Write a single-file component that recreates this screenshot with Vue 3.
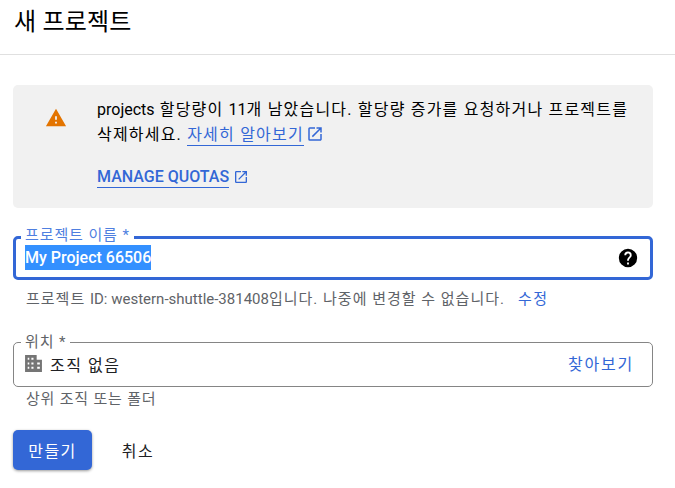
<script setup>
</script>

<template>
  <div class="page">
    <header class="head"><h1>새 프로젝트</h1></header>
    <main class="body">
      <section class="notice">
        <svg class="warn" viewBox="0 0 24 24" width="22" height="22"><path fill="#e37400" d="M1 21h22L12 2 1 21zm12-3h-2v-2h2v2zm0-4h-2v-4h2v4z"/></svg>
        <div class="notice-text">
          <p><span class="lat">projects</span> 할당량이 <span class="lat">11</span>개 남았습니다. 할당량 증가를 요청하거나 프로젝트를<br>삭제하세요. <a class="link">자세히 알아보기</a><svg class="ext ext-first" viewBox="0 0 24 24" width="18" height="18"><path fill="#3367d6" d="M19 19H5V5h7V3H5a2 2 0 0 0-2 2v14a2 2 0 0 0 2 2h14c1.100 0 2-.9 2-2v-7h-2v7zM14 3v2h3.590l-9.830 9.830 1.410 1.410L19 6.410V10h2V3h-7z"/></svg></p>
          <p class="manage"><a class="link strong lat">MANAGE QUOTAS</a><svg class="ext" viewBox="0 0 24 24" width="16" height="16"><path fill="#3367d6" d="M19 19H5V5h7V3H5a2 2 0 0 0-2 2v14a2 2 0 0 0 2 2h14c1.100 0 2-.9 2-2v-7h-2v7zM14 3v2h3.590l-9.830 9.830 1.410 1.410L19 6.410V10h2V3h-7z"/></svg></p>
        </div>
      </section>

      <div class="field focused">
        <span class="legend">프로젝트 이름 *</span>
        <div class="control">
          <span class="selected">My Project 66506</span>
          <svg class="help" viewBox="0 0 24 24" width="22" height="22"><path d="M12 2a10 10 0 1 0 0 20 10 10 0 0 0 0-20zm1 17h-2v-2h2v2zm2.070-7.750-.9.920C13.450 12.900 13 13.500 13 15h-2v-.5c0-1.100.450-2.100 1.170-2.830l1.240-1.260A2 2 0 1 0 10 9H8a4 4 0 1 1 8 0c0 .880-.360 1.680-.930 2.250z"/></svg>
        </div>
      </div>
      <p class="hint id-hint"><span>프로젝트 <span class="lat">ID: western-shuttle-381408</span>입니다. 나중에 변경할 수 없습니다.</span><a class="edit">수정</a></p>

      <div class="field location">
        <span class="legend grey">위치 *</span>
        <div class="control">
          <svg class="building" viewBox="0 0 18 18" width="19" height="19"><path fill="#757575" fill-rule="evenodd" d="M1 1h11v4.500h5V17H1V1zm2.500 2.500v2h1.500v-2H3.500zm3.500 0v2h2v-2H7zM3.500 8v2h1.500V8H3.500zM7 8v2h2V8H7zm5.500 0v2H15V8h-2.500zM3.500 12v2h1.500v-2H3.500zM7 12v2h2v-2H7zm5.500 0v2H15v-2h-2.500z"/></svg>
          <span class="value">조직 없음</span>
          <a class="browse">찾아보기</a>
        </div>
      </div>
      <p class="hint parent">상위 조직 또는 폴더</p>

      <div class="actions">
        <button class="create">만들기</button>
        <button class="cancel">취소</button>
      </div>
    </main>
  </div>
</template>

<style>
html, body { margin: 0; background: #fff; overflow: hidden; }
</style>

<style scoped>
.page { width: 675px; height: 488px; overflow: hidden; font-family: Roboto, "Noto Sans CJK KR", sans-serif; color: #202124; }
.head { height: 54px; border-bottom: 1px solid #e0e0e0; }
h1 { margin: 0; padding: 6px 0 0 14px; font-size: 24px; line-height: 32px; font-weight: 400; color: #000; letter-spacing: .2px; }
.body { padding: 30px 22px 0 13px; }
.notice { display: flex; height: 123px; background: #f1f1f1; border-radius: 5px; }
.warn { margin: 22px 0 0 32px; flex: none; }
.notice-text { margin-left: 30px; padding-top: 12px; width: 550px; font-size: 16px; line-height: 25px; color: #000; letter-spacing: 1.200px; }
.notice-text p { margin: 0; }
.lat { letter-spacing: 0; }
.link { color: #3367d6; border-bottom: 1px solid #3367d6; padding-bottom: 1px; }
.strong { font-weight: 500; }
.ext { vertical-align: -3px; margin-left: 2px; }
.manage { margin-top: 17px !important; }
.manage .ext { margin-left: 4px; }
.field { position: relative; box-sizing: border-box; border-radius: 5px; }
.focused { margin-top: 28px; border: 3px solid #3367d6; height: 44px; }
.location { margin-top: 33px; border: 1px solid #858585; height: 45px; }
.legend { position: absolute; top: -14px; left: 5px; background: #fff; padding: 0 4px; font-size: 15px; line-height: 20px; letter-spacing: .9px; color: #4f7fe0; }
.location .legend { left: 7px; top: -11px; }
.grey { color: #5f6368; }
.control { display: flex; align-items: center; height: 100%; }
.focused .control { padding: 0 11px 0 9px; }
.selected { background: #3390ff; color: #fff; font-size: 16px; line-height: 25px; font-weight: 500; margin-top: -1px; }
.help { margin-left: auto; }
.hint { margin: 0; font-size: 15px; line-height: 20px; color: #5f6368; letter-spacing: 1px; }
.id-hint { margin-top: 9px; padding-left: 13px; display: flex; gap: 13px; }
.edit { letter-spacing: 1.500px; }
.edit, .browse { color: #3367d6; }
.location .control { padding: 0 19px 0 10px; }
.building { margin-top: -3px; }
.value { margin-left: 7px; margin-top: -2px; font-size: 16px; color: #202124; letter-spacing: 1.500px; }
.browse { margin-left: auto; margin-top: -4px; font-size: 16px; letter-spacing: 1.800px; margin-right: -1px; }
.parent { padding-left: 13px; margin-top: 2px; letter-spacing: .8px; }
.actions { display: flex; margin-top: 21px; }
button { font-family: inherit; font-size: 16px; border: 0; background: none; cursor: pointer; letter-spacing: 1.500px; }
.create { width: 79px; height: 40px; background: #3367d6; color: #fff; border-radius: 5px; box-shadow: 0 1px 3px rgba(0,0,0,.4); }
.cancel { width: 92px; height: 40px; color: #202124; }
</style>
